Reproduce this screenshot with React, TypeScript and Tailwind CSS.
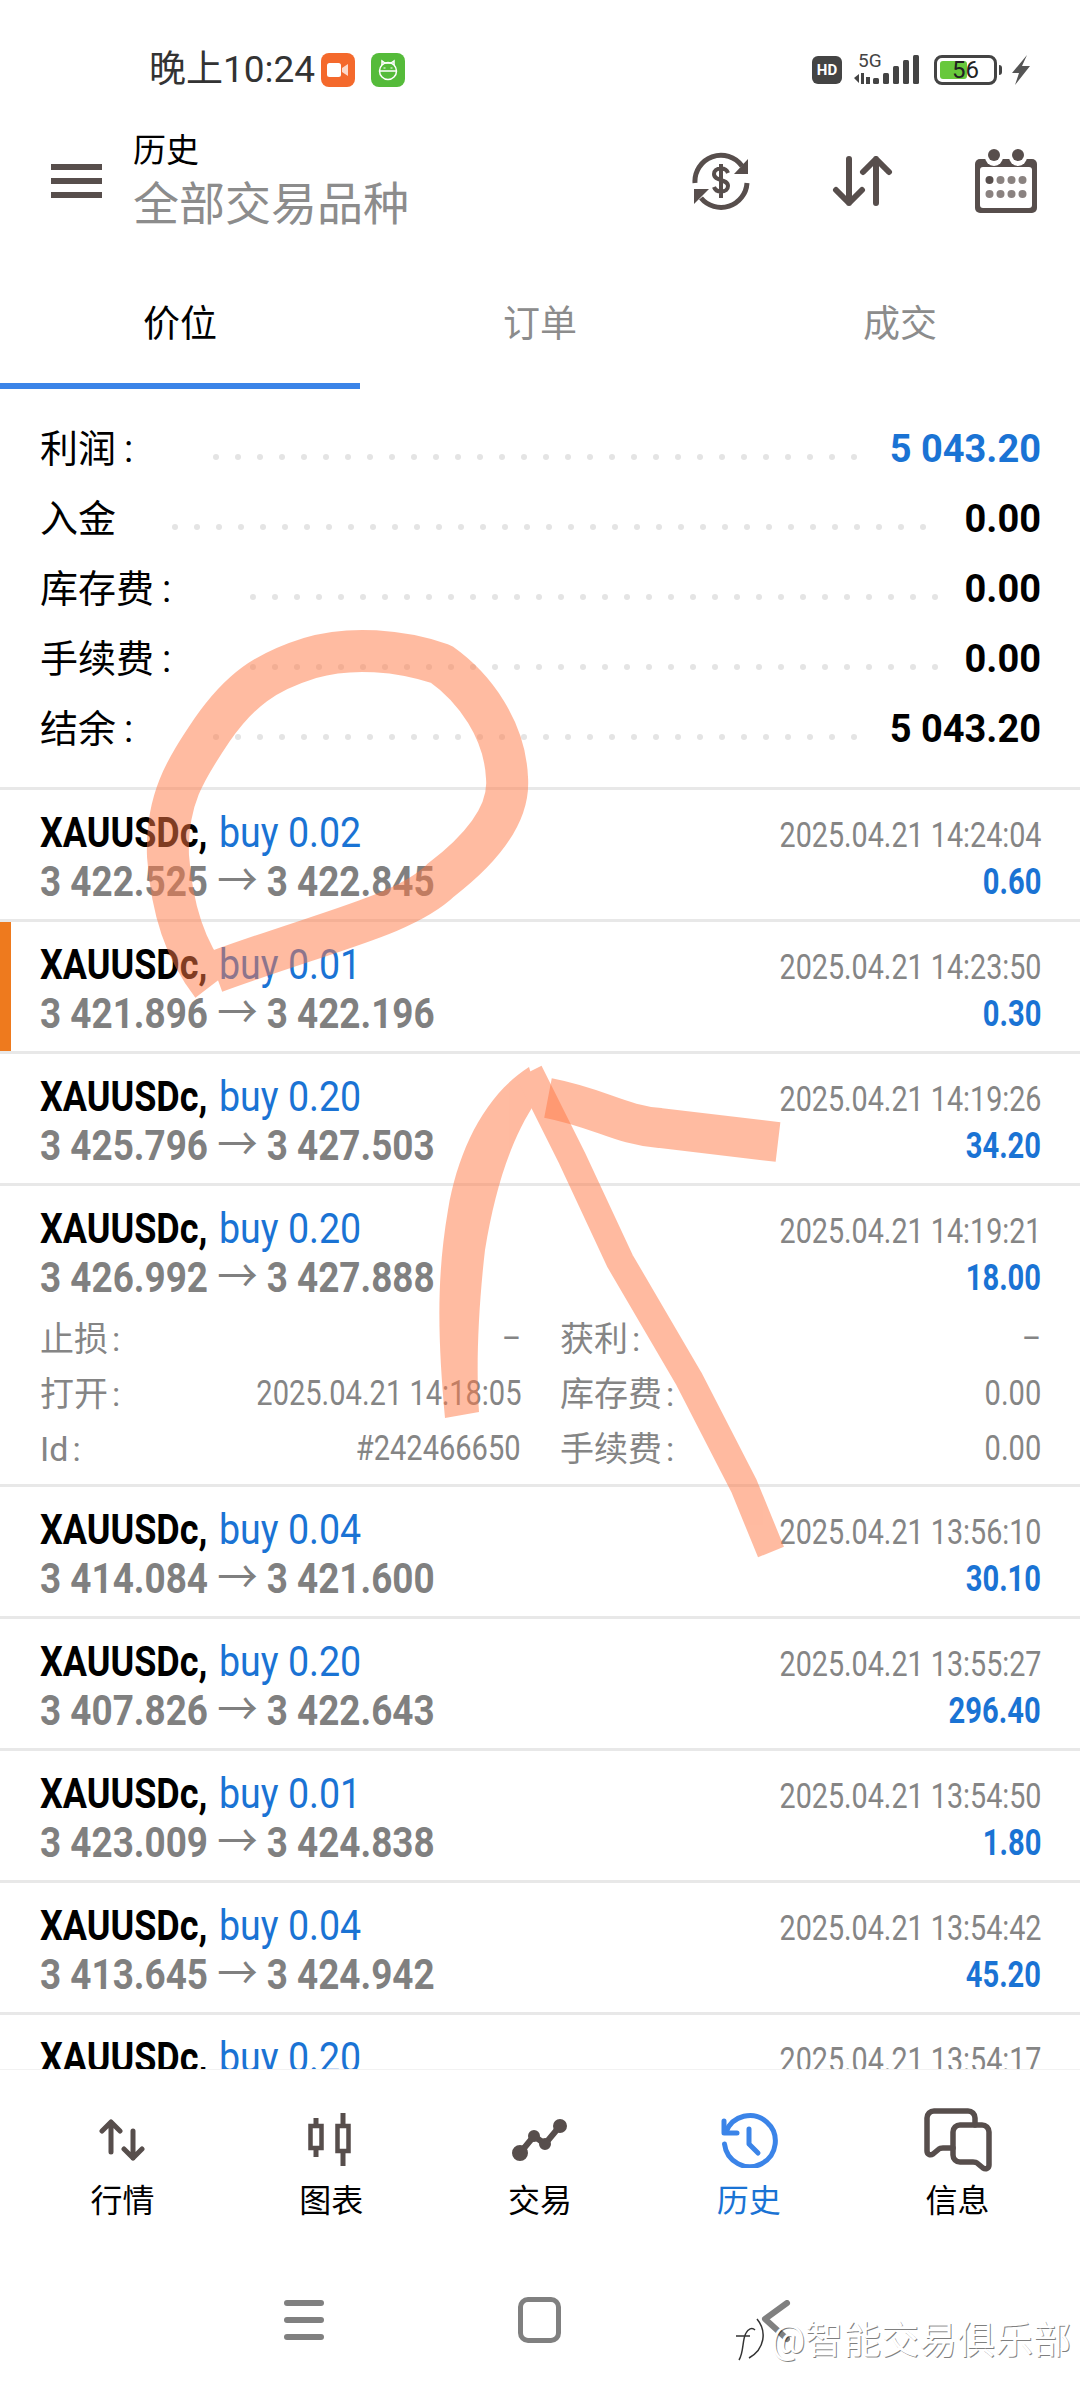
import React from 'react';

const FONT = "font-['Roboto','Noto_Sans_CJK_SC',sans-serif]";

const summary = [
  { label: '利润', colon: true, labelWidth: 'w-[173px]', dots: 30, value: '5 043.20', color: 'text-[#1a73d4]' },
  { label: '入金', colon: false, labelWidth: 'w-[132px]', dots: 35, value: '0.00', color: 'text-black' },
  { label: '库存费', colon: true, labelWidth: 'w-[210px]', dots: 32, value: '0.00', color: 'text-black' },
  { label: '手续费', colon: true, labelWidth: 'w-[210px]', dots: 32, value: '0.00', color: 'text-black' },
  { label: '结余', colon: true, labelWidth: 'w-[173px]', dots: 30, value: '5 043.20', color: 'text-black' },
];

interface Trade {
  lot: string;
  open: string;
  close: string;
  date: string;
  profit: string;
  marked?: boolean;
  details?: boolean;
}

const trades: Trade[] = [
  { lot: '0.02', open: '3 422.525', close: '3 422.845', date: '2025.04.21 14:24:04', profit: '0.60' },
  { lot: '0.01', open: '3 421.896', close: '3 422.196', date: '2025.04.21 14:23:50', profit: '0.30', marked: true },
  { lot: '0.20', open: '3 425.796', close: '3 427.503', date: '2025.04.21 14:19:26', profit: '34.20' },
  { lot: '0.20', open: '3 426.992', close: '3 427.888', date: '2025.04.21 14:19:21', profit: '18.00', details: true },
  { lot: '0.04', open: '3 414.084', close: '3 421.600', date: '2025.04.21 13:56:10', profit: '30.10' },
  { lot: '0.20', open: '3 407.826', close: '3 422.643', date: '2025.04.21 13:55:27', profit: '296.40' },
  { lot: '0.01', open: '3 423.009', close: '3 424.838', date: '2025.04.21 13:54:50', profit: '1.80' },
  { lot: '0.04', open: '3 413.645', close: '3 424.942', date: '2025.04.21 13:54:42', profit: '45.20' },
  { lot: '0.20', open: '3 419.120', close: '3 424.500', date: '2025.04.21 13:54:17', profit: '107.60' },
];

const DetailCell = ({ label, value }: { label: string; value: string }) => (
  <div className="flex items-center justify-between h-[55px] text-[#858585]">
    <span className="text-[34px] whitespace-nowrap">
      {label}
      <span className="ml-[4px]">:</span>
    </span>
    <span className="text-[35px] inline-block scale-x-[0.83] origin-right whitespace-nowrap">{value}</span>
  </div>
);

const TradeRow = ({ trade }: { trade: Trade }) => (
  <div className="relative border-b-[3px] border-[#e8e8e8] pl-[40px] pr-[39px]">
    {trade.marked && <div className="absolute left-0 top-0 bottom-0 w-[11px] bg-[#ee7a1e]" />}
    <div className="flex justify-between h-[129px]">
      <div className="flex flex-col pt-[18px]">
        <div className="flex h-[49px] leading-[49px] text-[42px] whitespace-nowrap">
          <span className="w-[179px] font-bold text-black inline-block scale-x-[0.857] origin-left">XAUUSDc,</span>
          <span className="text-[#1a73d4] inline-block scale-x-[0.895] origin-left">buy {trade.lot}</span>
        </div>
        <div className="h-[49px] leading-[49px] text-[42px] font-bold text-[#808080] whitespace-nowrap inline-block scale-x-[0.878] origin-left">
          {trade.open} <span className="font-normal text-[46px] leading-none">→</span> {trade.close}
        </div>
      </div>
      <div className="flex flex-col items-end pt-[23px]">
        <div className="h-[46px] leading-[46px] text-[35px] text-[#858585] whitespace-nowrap inline-block scale-x-[0.82] origin-right">{trade.date}</div>
        <div className="h-[46px] leading-[46px] text-[36px] font-bold text-[#1a73d4] whitespace-nowrap inline-block scale-x-[0.81] origin-right">{trade.profit}</div>
      </div>
    </div>
    {trade.details && (
      <div className="grid grid-cols-2 gap-x-[39px] pb-[7px] mt-[-3px]">
        <DetailCell label="止损" value="–" />
        <DetailCell label="获利" value="–" />
        <DetailCell label="打开" value="2025.04.21 14:18:05" />
        <DetailCell label="库存费" value="0.00" />
        <DetailCell label="Id" value="#242466650" />
        <DetailCell label="手续费" value="0.00" />
      </div>
    )}
  </div>
);

const tabs = ['价位', '订单', '成交'];

const nav = [
  {
    label: '行情',
    icon: (
      <svg width="46" height="42" viewBox="0 0 46 42" fill="none" stroke="#574e4c" strokeWidth="5" strokeLinecap="round" strokeLinejoin="round">
        <path d="M12 33V3M3 12l9-9 9 9" />
        <path d="M34 12v27M25 30l9 9 9-9" />
      </svg>
    ),
  },
  {
    label: '图表',
    icon: (
      <svg width="46" height="54" viewBox="0 0 46 54" fill="none" stroke="#574e4c">
        <path d="M8 5v10M8 33v11M35 0v13M35 37v16" strokeWidth="5" />
        <rect x="2.500" y="13" width="11" height="22" strokeWidth="4.500" />
        <rect x="29.500" y="13" width="11" height="25" strokeWidth="4.500" />
      </svg>
    ),
  },
  {
    label: '交易',
    icon: (
      <svg width="58" height="46" viewBox="0 0 58 46" fill="none" stroke="#574e4c" strokeWidth="6" strokeLinecap="round" strokeLinejoin="round">
        <path d="M9 36L23 19l11 8L49 9" />
        <circle cx="9" cy="36" r="5" fill="#574e4c" />
        <circle cx="23" cy="19" r="3" fill="#574e4c" />
        <circle cx="34" cy="27" r="3" fill="#574e4c" />
        <circle cx="49" cy="9" r="4" fill="#574e4c" />
      </svg>
    ),
  },
  {
    label: '历史',
    active: true,
    icon: (
      <svg width="58" height="56" viewBox="0 0 58 56" fill="none" stroke="#3b84e8" strokeWidth="5" strokeLinecap="round" strokeLinejoin="round">
        <path d="M6 20A25.500 25.500 0 1 1 4.500 32" />
        <path d="M4 9v12h13" />
        <path d="M29 17v15l9 9" />
      </svg>
    ),
  },
  {
    label: '信息',
    icon: (
      <svg width="68" height="64" viewBox="0 0 68 64" fill="none" stroke="#574e4c" strokeWidth="5.500" strokeLinecap="round" strokeLinejoin="round">
        <path d="M51 17v-7a7 7 0 0 0-7-7H10a7 7 0 0 0-7 7v33c0 3 3 5 6 3l6-5c1-1 2-1 4-1h10" />
        <path d="M36 17h22a7 7 0 0 1 7 7v33c0 3-3 5-6 3l-6-5c-1-1-2-1-4-1H36a7 7 0 0 1-7-7V24a7 7 0 0 1 7-7z" />
      </svg>
    ),
  },
];

export default function App() {
  return (
    <div className={`${FONT} relative w-[1080px] h-[2400px] bg-white overflow-hidden flex flex-col`}>
      {/* status bar */}
      <div className="h-[116px] shrink-0 flex items-start justify-between pt-[52px] pl-[149px] pr-[50px]">
        <div className="flex items-center gap-[8px] h-[36px]">
          <span className="text-[37px] leading-[36px] text-[#333] inline-block w-[164px] whitespace-nowrap">晚上10:24</span>
          <div className="w-[34px] h-[34px] rounded-lg bg-[#f4692c] flex items-center justify-center">
            <svg width="22" height="14" viewBox="0 0 22 14" fill="#fff">
              <rect width="14" height="14" rx="2.500" />
              <path d="M15 5l6-4v12l-6-4z" fillOpacity="0.75" />
            </svg>
          </div>
          <div className="ml-[8px] w-[34px] h-[34px] rounded-lg bg-[#55bb3a] flex items-center justify-center">
            <svg width="24" height="24" viewBox="0 0 24 24" fill="none" stroke="#fff" strokeWidth="1.500">
              <path d="M6 7V3l3 2h6l3-2v4" />
              <circle cx="12" cy="13" r="8.500" />
              <path d="M3.500 13h17" />
              <path d="M8.500 9.500v1M15.500 9.500v1" strokeWidth="2" />
            </svg>
          </div>
        </div>
        <div className="flex items-center gap-[8px] h-[36px]">
          <div className="w-[30px] h-[28px] rounded-md bg-[#444] text-white text-[15px] font-bold flex items-center justify-center">HD</div>
          <div className="relative w-[68px] h-[34px] ml-[3px]">
            <span className="absolute left-[5px] top-[-6px] text-[19px] text-[#444]">5G</span>
            <svg className="absolute left-0 top-0" width="68" height="34" viewBox="0 0 68 34" fill="#444">
              <path d="M1 25l5-4v9zM8 20h3v11H8zM13 24l4 0v7h-4z" />
              <rect x="20" y="25" width="6" height="6" rx="1.500" />
              <rect x="30" y="20" width="6" height="11" rx="1.500" />
              <rect x="40" y="13" width="6" height="18" rx="1.500" />
              <rect x="50" y="7" width="6" height="24" rx="1.500" />
              <rect x="60" y="2" width="6" height="29" rx="1.500" />
            </svg>
          </div>
          <div className="relative w-[63px] h-[30px] ml-[5px] rounded-[8px] border-[3px] border-[#444]">
            <div className="absolute left-[3px] top-[3px] bottom-[3px] w-[27px] rounded-[3px] bg-[#68c83c]" />
            <span className="absolute left-[15px] top-[-1px] text-[24px] leading-[26px] text-[#222]">56</span>
          </div>
          <div className="w-[3px] h-[10px] bg-[#444] rounded-r-sm ml-[-6px]" />
          <svg width="18" height="30" viewBox="0 0 18 30" fill="#555" className="ml-[2px]">
            <path d="M15 0L0 18h7L3 30l15-19h-8z" />
          </svg>
        </div>
      </div>

      {/* header */}
      <div className="h-[130px] shrink-0 flex items-center pl-[51px] pr-[42px]">
        <div className="w-[51px] h-[34px] flex flex-col justify-between">
          <div className="h-[6px] bg-[#574e4c]" />
          <div className="h-[6px] bg-[#574e4c]" />
          <div className="h-[6px] bg-[#574e4c]" />
        </div>
        <div className="ml-[31px] flex flex-col pt-[6px]">
          <span className="text-[33px] leading-[40px] text-black">历史</span>
          <span className="text-[46px] leading-[66px] text-[#8c8c8c]">全部交易品种</span>
        </div>
        <div className="ml-auto flex items-center">
          <svg width="58" height="58" viewBox="0 0 58 58" fill="none" stroke="#574e4c" strokeWidth="5" strokeLinejoin="round" className="mr-[-2px]">
            <path d="M3 31A26 26 0 0 1 50 14" />
            <path d="M55 31A26 26 0 0 1 9 46" />
            <path d="M56 7v15H42z" fill="#574e4c" stroke="none" />
            <path d="M2 37v15l15-15z" fill="#574e4c" stroke="none" />
            <path d="M36 21c-1-3-3.500-4.500-7-4.500-4.500 0-7 2.500-7 5.500 0 7.500 14 4.500 14 12 0 3-2.500 5.500-7 5.500-3.500 0-6-1.500-7-4.500M29 12v34" strokeWidth="4" />
          </svg>
          <svg width="62" height="50" viewBox="0 0 62 50" fill="none" stroke="#574e4c" strokeWidth="6" strokeLinecap="round" strokeLinejoin="round" className="ml-[84px]">
            <path d="M17 3v44M4 34l13 13 13-13" />
            <path d="M44 47V3M31 16L44 3l13 13" />
          </svg>
          <svg width="64" height="64" viewBox="0 0 64 64" className="ml-[80px]">
            <rect x="1" y="10" width="62" height="54" rx="5" fill="#574e4c" />
            <circle cx="20" cy="8" r="9" fill="#fff" />
            <circle cx="44" cy="8" r="9" fill="#fff" />
            <circle cx="20" cy="6" r="6" fill="#574e4c" />
            <circle cx="44" cy="6" r="6" fill="#574e4c" />
            <rect x="6" y="18" width="52" height="41" rx="3" fill="#fff" />
            {[15, 26, 37, 48].map((x, i) => (
              <React.Fragment key={x}>
                <circle cx={x + 0.5} cy="31" r="4" fill={i === 0 ? '#574e4c' : '#8a8280'} />
                <circle cx={x + 0.5} cy="45" r="4" fill="#8a8280" />
              </React.Fragment>
            ))}
          </svg>
        </div>
      </div>

      {/* tabs */}
      <div className="relative h-[143px] shrink-0 grid grid-cols-3 pt-[14px]">
        {tabs.map((tab, i) => (
          <div key={tab} className={`flex items-center justify-center text-[37px] ${i === 0 ? 'text-black' : 'text-[#8c8c8c]'}`}>
            {tab}
          </div>
        ))}
        <div className="absolute left-0 bottom-0 w-[360px] h-[6px] bg-[#3b84e8]" />
      </div>

      {/* summary */}
      <div className="h-[401px] shrink-0 pt-[25px] pl-[40px] pr-[39px] border-b-[3px] border-[#e8e8e8]">
        {summary.map((row, i) => (
          <div key={i} className="flex items-center h-[70px]">
            <span className={`${row.labelWidth} shrink-0 text-[38px] text-black whitespace-nowrap`}>
              {row.label}
              {row.colon && <span className="ml-[8px]">:</span>}
            </span>
            <div className="flex mt-[16px]">
              {Array.from({ length: row.dots }).map((_, d) => (
                <div key={d} className="w-[6px] h-[6px] rounded-full bg-[#e4e4e4] mr-[16px]" />
              ))}
            </div>
            <span className={`ml-auto text-[38px] font-bold ${row.color}`}>{row.value}</span>
          </div>
        ))}
      </div>

      {/* trade list */}
      <div className="flex-1 min-h-0 overflow-hidden">
        {trades.map((trade, i) => (
          <TradeRow key={i} trade={trade} />
        ))}
      </div>

      {/* bottom nav */}
      <div className="relative h-[331px] shrink-0 bg-white border-t border-[#f2f2f2]">
        <div className="grid grid-cols-5 px-[18px] pt-[36px]">
          {nav.map((item) => (
            <div key={item.label} className="flex flex-col items-center">
              <div className="h-[68px] flex items-center justify-center">{item.icon}</div>
              <span className={`mt-[6px] text-[32px] leading-[42px] ${item.active ? 'text-[#1a73d4]' : 'text-black'}`}>{item.label}</span>
            </div>
          ))}
        </div>
        <div className="flex items-center pl-[284px] mt-[74px]">
          <div className="w-[40px] h-[40px] flex flex-col justify-between">
            <div className="h-[6px] rounded-full bg-[#808080]" />
            <div className="h-[6px] rounded-full bg-[#808080]" />
            <div className="h-[6px] rounded-full bg-[#808080]" />
          </div>
          <div className="ml-[194px] w-[43px] h-[46px] rounded-[10px] border-[5px] border-[#808080]" />
          <svg width="30" height="44" viewBox="0 0 30 44" fill="none" stroke="#808080" strokeWidth="6" strokeLinecap="round" strokeLinejoin="round" className="ml-[200px] mt-[4px]">
            <path d="M26 3L4 19l22 20" />
          </svg>
        </div>
      </div>

      {/* watermark */}
      <div className="absolute left-[733px] top-[2316px] flex items-center text-white [text-shadow:1px_1px_0_rgba(0,0,0,0.5)]">
        <svg width="38" height="48" viewBox="0 0 38 48" fill="none" stroke="#333" strokeWidth="1.500">
          <path d="M3 20h14M6 44c5-8 3-20 7-27 2-4 6-6 9-3" />
          <path d="M24 3c10 12 8 30-8 39" />
        </svg>
        <span className="text-[38px] leading-[46px] whitespace-nowrap">@智能交易俱乐部</span>
      </div>

      {/* hand drawn marks */}
      <svg className="absolute left-0 top-0 pointer-events-none" width="1080" height="2400" fill="none" stroke="#ff7744" strokeLinejoin="round">
        <path
          strokeOpacity="0.5"
          strokeWidth="42"
          d="M212 985C185 950 172 910 168 856C166 800 185 770 212 730C240 690 265 672 310 658C350 646 400 650 441 664C475 688 505 730 507 778C510 815 480 850 441 880C405 915 330 930 215 972"
        />
        <g opacity="0.5">
          <path fill="#ff7744" stroke="none" d="M445 1418C438 1340 436 1280 448 1210C458 1150 485 1095 529 1067C533 1080 535 1090 537 1100C510 1140 495 1190 485 1250C478 1310 476 1370 479 1412z" />
          <path strokeWidth="28" d="M529 1072L572 1158L620 1261L689 1379L744 1486L771 1552" />
        </g>
        <path strokeOpacity="0.5" strokeWidth="40" d="M548 1098C600 1108 620 1125 660 1128L778 1142" />
      </svg>
    </div>
  );
}
